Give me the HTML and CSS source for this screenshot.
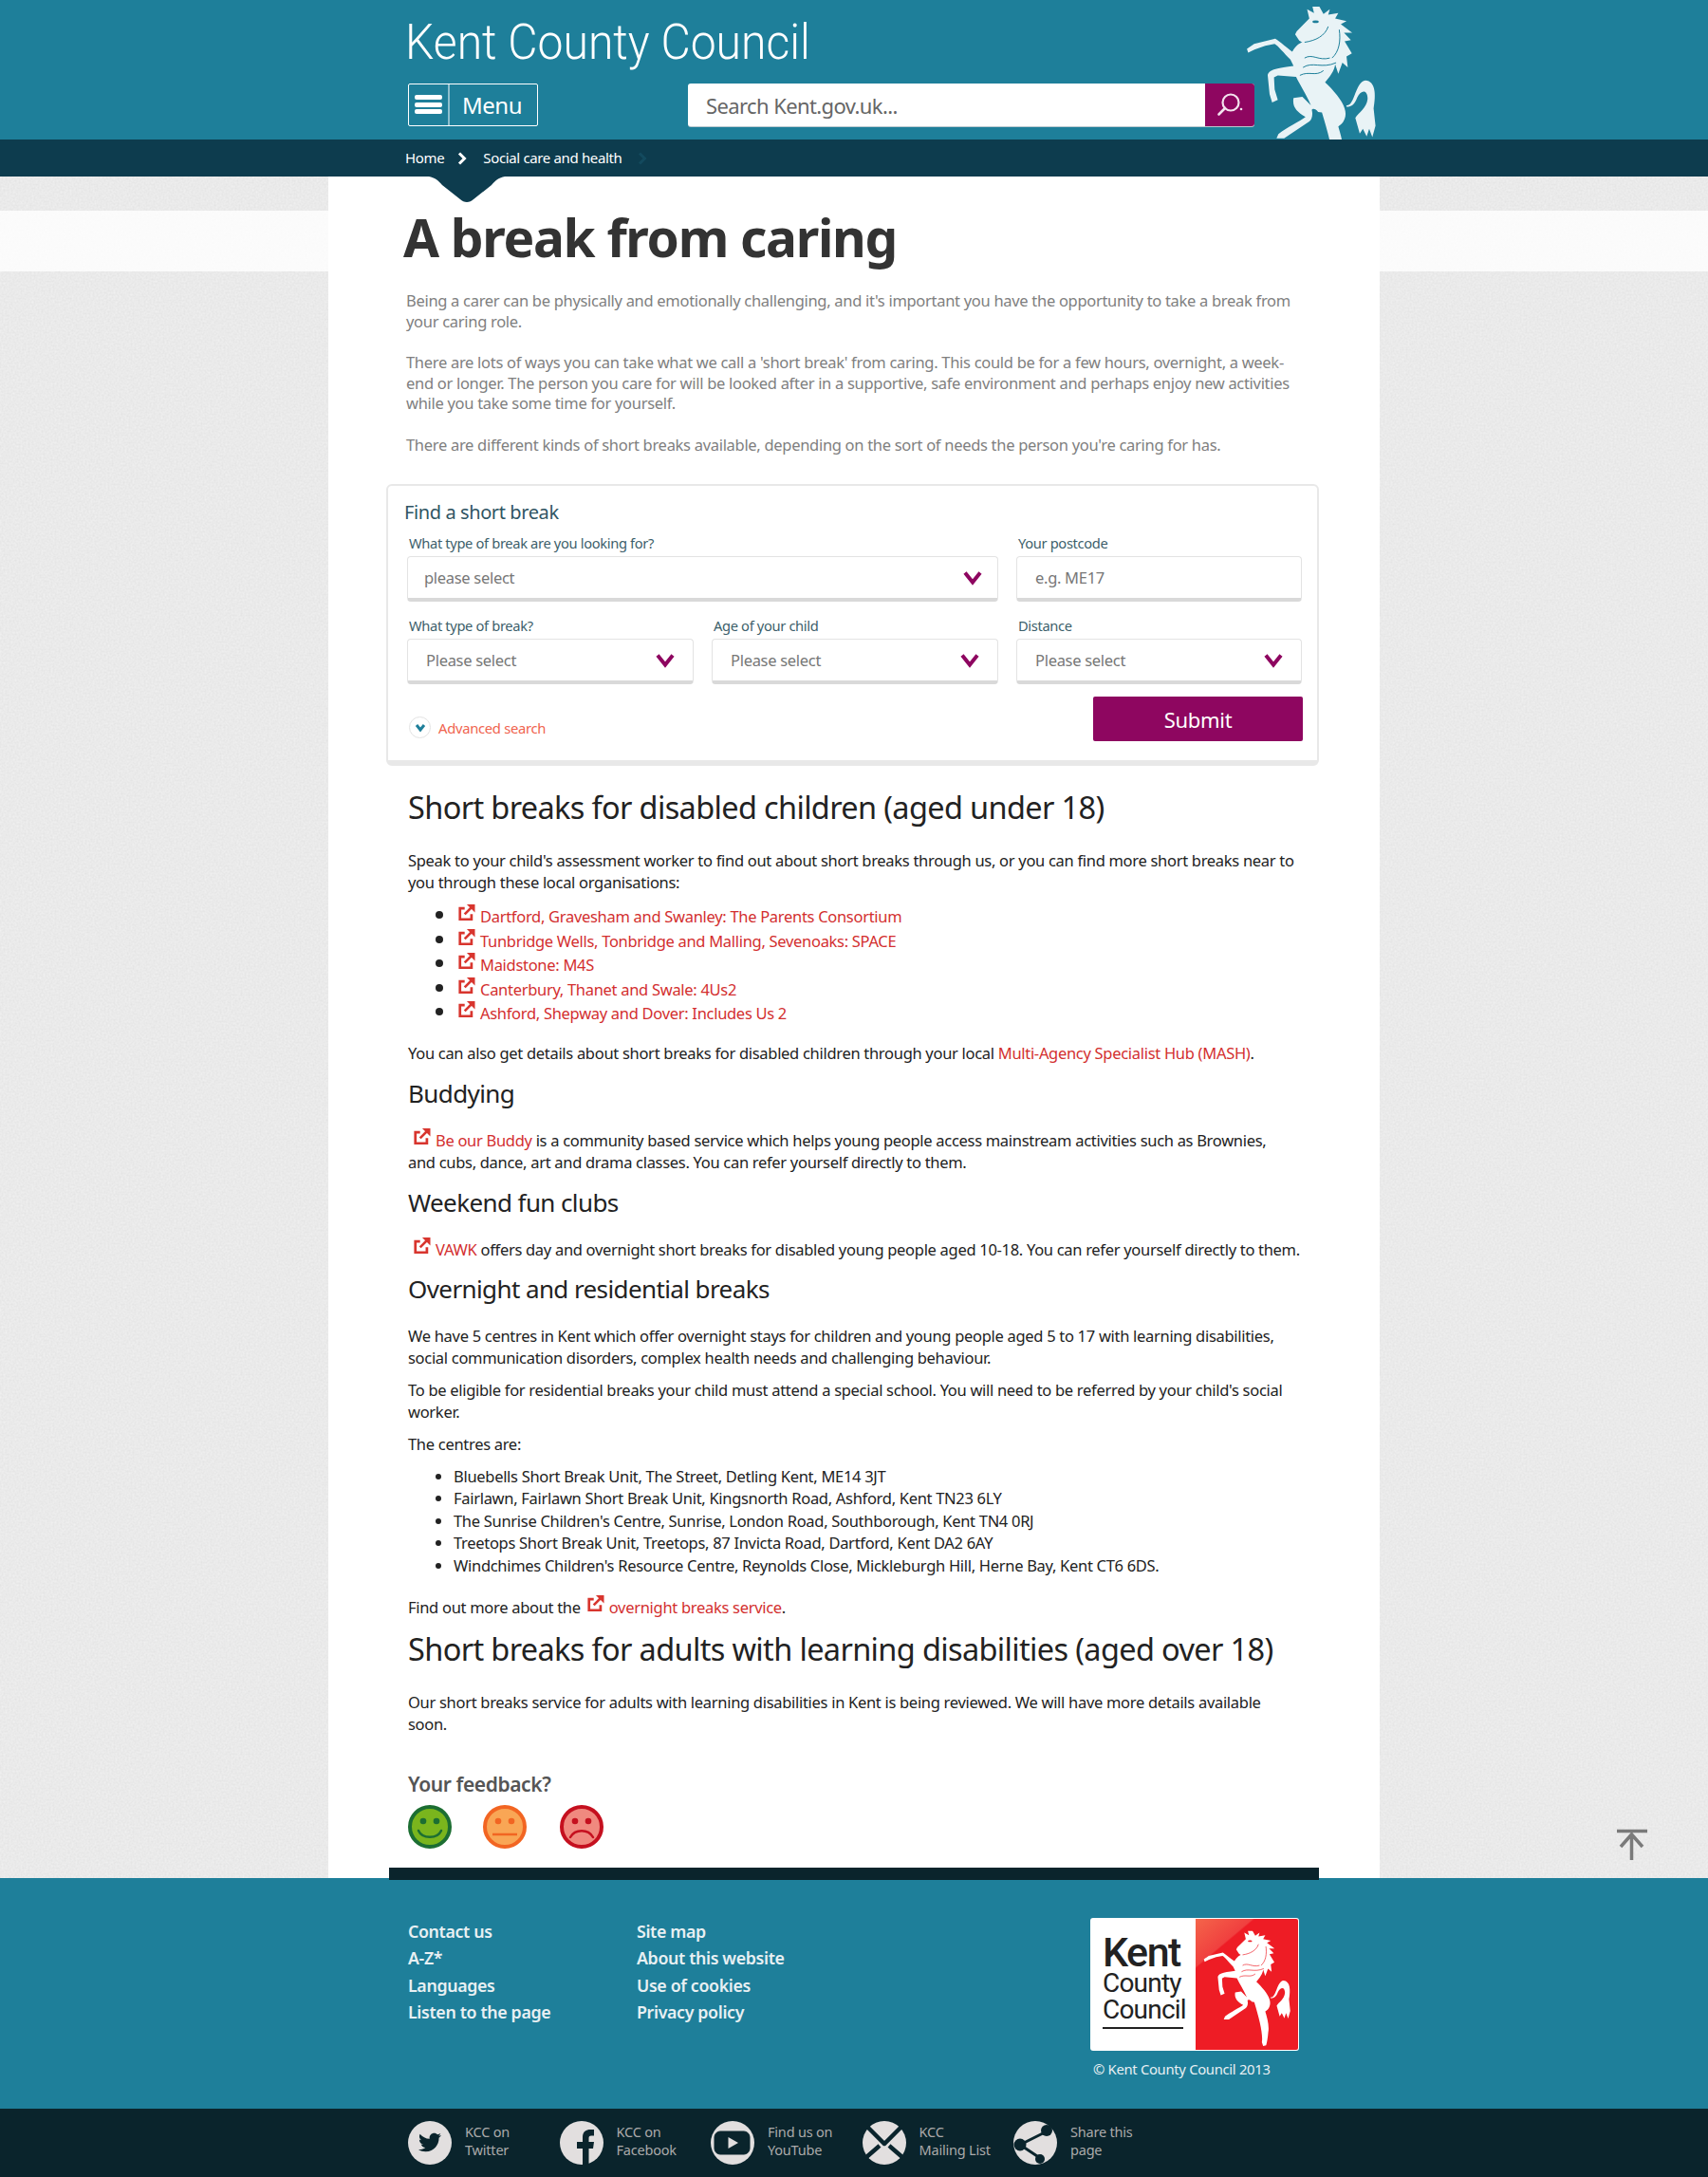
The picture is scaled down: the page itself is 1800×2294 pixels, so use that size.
FILE: index.html
```html
<!DOCTYPE html>
<html lang="en">
<head>
  <meta charset="UTF-8" />
  <title>A break from caring - Kent County Council</title>
  <link rel="stylesheet" href="styles.css">
</head>
<body>
  <svg class="defs" width="0" height="0">
    <symbol id="horse" viewBox="930 10 430 560">
      <path fill="currentColor" d="M1172 22 L1185 45 L1205 30 L1200 48 L1232 42 L1222 60 L1258 68 L1240 78 L1276 105 L1250 105 L1272 128 L1252 132 L1275 170 L1258 180 L1262 215 L1245 200 L1232 235 L1222 205 C1220 225 1205 245 1190 262 C1215 285 1245 320 1252 345 C1262 375 1245 395 1232 402 C1240 430 1252 470 1246 500 C1244 525 1240 550 1236 562 L1222 566 L1216 548 C1222 510 1205 440 1180 358 L1168 356 C1160 345 1150 345 1148 350 C1152 365 1148 380 1140 386 L1060 440 L1036 440 L1042 426 C1070 405 1110 385 1128 372 C1100 355 1085 340 1090 312 L1118 308 L1145 335 C1130 300 1110 270 1098 245 L1040 240 L1028 246 L1030 285 L1040 318 L1022 326 L1014 300 L1008 240 C1010 225 1025 218 1090 210 L1080 190 C1060 170 1040 145 1030 140 L1000 146 L966 158 L946 168 L942 156 L965 140 L1032 124 C1050 135 1070 155 1086 165 C1098 145 1110 135 1128 132 L1118 136 L1108 130 L1095 110 L1100 100 L1140 60 L1133 30 L1155 42 L1150 22 Z"/>
      <path fill="currentColor" d="M1258 335 C1285 338 1285 260 1318 256 C1350 258 1352 300 1344 345 L1350 400 L1340 436 L1330 410 L1322 434 L1310 410 L1300 425 L1286 375 C1295 360 1322 345 1325 315 C1325 285 1305 285 1292 310 C1285 330 1275 340 1258 340 Z"/>
      <path fill="none" stroke="var(--horse-line)" stroke-width="3" d="M1235 95 C1240 130 1235 165 1212 185 M1125 135 C1160 130 1190 115 1200 85 M1125 185 C1150 170 1170 195 1205 185 M1120 215 C1150 195 1180 220 1225 200 M1110 240 C1140 225 1160 245 1185 225"/>
      <ellipse cx="1160" cy="70" rx="10" ry="4" fill="var(--horse-line)"/>
    </symbol>
    <symbol id="ext" viewBox="0 0 20 20">
      <path fill="none" stroke="currentColor" stroke-width="3" d="M8 4.500H2.500V17.500H16V11.500"/>
      <path fill="none" stroke="currentColor" stroke-width="3" d="M8 11.500L16 3.500"/>
      <path fill="currentColor" d="M10.500 0H20V9.500Z"/>
    </symbol>
    <symbol id="chev" viewBox="0 0 20 16">
      <path fill="none" stroke="#8e0660" stroke-width="4" d="M2 2.500L10 12.500L18 2.500"/>
    </symbol>
  </svg>

  <header class="site-header">
    <div class="wrap head-inner">
      <div class="site-name">Kent County Council</div>
      <div class="head-tools">
        <a class="menu-btn" href="#">
          <span class="burger"><i></i><i></i><i></i></span>
          <span class="menu-label">Menu</span>
        </a>
        <div class="search">
          <span class="search-text">Search Kent.gov.uk...</span>
          <span class="search-btn">
            <svg width="28" height="28" viewBox="0 0 28 28"><circle cx="15" cy="11" r="8.500" fill="none" stroke="#f3e3ee" stroke-width="2.200"/><path d="M9 17L2.500 23.500" stroke="#f3e3ee" stroke-width="2.600" stroke-linecap="round"/><circle cx="26" cy="18" r="1.300" fill="#f3e3ee"/></svg>
          </span>
        </div>
      </div>
      <svg class="head-horse"><use href="#horse"/></svg>
    </div>
  </header>

  <nav class="crumbs">
    <div class="wrap crumbs-inner">
      <a href="#">Home</a>
      <svg class="crumb-chev" width="10" height="14" viewBox="0 0 10 14"><path d="M2 1.500L7.500 7L2 12.500" fill="none" stroke="#fff" stroke-width="3"/></svg>
      <a href="#">Social care and health</a>
      <svg class="crumb-chev crumb-last" width="10" height="14" viewBox="0 0 10 14"><path d="M2 1.500L7.500 7L2 12.500" fill="none" stroke="#134a5e" stroke-width="3"/></svg>
      <svg class="crumb-notch" width="80" height="27" viewBox="0 0 80 27"><path d="M0 0H80C74 1 70 4 66 9L47 24C43 28 37 28 33 24L14 9C10 4 6 1 0 0Z" fill="#0d3c4e"/></svg>
    </div>
  </nav>

  <div class="page">
    <main class="wrap main">
      <h1>A break from caring</h1>
      <div class="intro">
        <p>Being a carer can be physically and emotionally challenging, and it's important you have the opportunity to take a break from your caring role.</p>
        <p>There are lots of ways you can take what we call a 'short break' from caring. This could be for a few hours, overnight, a week-end or longer. The person you care for will be looked after in a supportive, safe environment and perhaps enjoy new activities while you take some time for yourself.</p>
        <p>There are different kinds of short breaks available, depending on the sort of needs the person you're caring for has.</p>
      </div>

      <form class="finder">
        <div class="finder-title">Find a short break</div>
        <div class="finder-grid">
          <label class="field span2">
            <span>What type of break are you looking for?</span>
            <div class="box first"><b>please select</b><svg width="20" height="16"><use href="#chev"/></svg></div>
          </label>
          <label class="field">
            <span>Your postcode</span>
            <input class="box" type="text" placeholder="e.g. ME17">
          </label>
          <label class="field">
            <span>What type of break?</span>
            <div class="box"><b>Please select</b><svg width="20" height="16"><use href="#chev"/></svg></div>
          </label>
          <label class="field">
            <span>Age of your child</span>
            <div class="box"><b>Please select</b><svg width="20" height="16"><use href="#chev"/></svg></div>
          </label>
          <label class="field">
            <span>Distance</span>
            <div class="box"><b>Please select</b><svg width="20" height="16"><use href="#chev"/></svg></div>
          </label>
        </div>
        <div class="finder-foot">
          <a class="advanced" href="#">
            <span class="adv-circle"><svg width="12" height="10" viewBox="0 0 12 10"><path d="M2 2L6 7L10 2" fill="none" stroke="#1e7f9a" stroke-width="3"/></svg></span>
            Advanced search
          </a>
          <button class="submit" type="button">Submit</button>
        </div>
      </form>

      <section class="content">
        <h2>Short breaks for disabled children (aged under 18)</h2>
        <p class="after-h2">Speak to your child's assessment worker to find out about short breaks through us, or you can find more short breaks near to you through these local organisations:</p>
        <ul class="links">
          <li><a href="#"><svg class="ext"><use href="#ext"/></svg>Dartford, Gravesham and Swanley: The Parents Consortium</a></li>
          <li><a href="#"><svg class="ext"><use href="#ext"/></svg>Tunbridge Wells, Tonbridge and Malling, Sevenoaks: SPACE</a></li>
          <li><a href="#"><svg class="ext"><use href="#ext"/></svg>Maidstone: M4S</a></li>
          <li><a href="#"><svg class="ext"><use href="#ext"/></svg>Canterbury, Thanet and Swale: 4Us2</a></li>
          <li><a href="#"><svg class="ext"><use href="#ext"/></svg>Ashford, Shepway and Dover: Includes Us 2</a></li>
        </ul>
        <p>You can also get details about short breaks for disabled children through your local <a href="#">Multi-Agency Specialist Hub (MASH)</a>.</p>

        <h3>Buddying</h3>
        <p><a class="lead" href="#"><svg class="ext"><use href="#ext"/></svg>Be our Buddy</a> is a community based service which helps young people access mainstream activities such as Brownies,<br>and cubs, dance, art and drama classes. You can refer yourself directly to them.</p>

        <h3>Weekend fun clubs</h3>
        <p><a class="lead" href="#"><svg class="ext"><use href="#ext"/></svg>VAWK</a> offers day and overnight short breaks for disabled young people aged 10-18. You can refer yourself directly to them.</p>

        <h3 class="h3-tight">Overnight and residential breaks</h3>
        <p>We have 5 centres in Kent which offer overnight stays for children and young people aged 5 to 17 with learning disabilities, social communication disorders, complex health needs and challenging behaviour.</p>
        <p>To be eligible for residential breaks your child must attend a special school. You will need to be referred by your child's social worker.</p>
        <p>The centres are:</p>
        <ul class="centres">
          <li>Bluebells Short Break Unit, The Street, Detling Kent, ME14 3JT</li>
          <li>Fairlawn, Fairlawn Short Break Unit, Kingsnorth Road, Ashford, Kent TN23 6LY</li>
          <li>The Sunrise Children's Centre, Sunrise, London Road, Southborough, Kent TN4 0RJ</li>
          <li>Treetops Short Break Unit, Treetops, 87 Invicta Road, Dartford, Kent DA2 6AY</li>
          <li>Windchimes Children's Resource Centre, Reynolds Close, Mickleburgh Hill, Herne Bay, Kent CT6 6DS.</li>
        </ul>
        <p>Find out more about the <a class="inline-ext" href="#"><svg class="ext"><use href="#ext"/></svg>overnight breaks service</a>.</p>

        <h2 class="h2-second">Short breaks for adults with learning disabilities (aged over 18)</h2>
        <p class="after-h2">Our short breaks service for adults with learning disabilities in Kent is being reviewed. We will have more details available<br>soon.</p>
      </section>

      <div class="feedback">
        <div class="feedback-title">Your feedback?</div>
        <div class="faces">
          <svg width="46" height="46" viewBox="0 0 46 46"><circle cx="23" cy="23" r="21" fill="#7ab51d" stroke="#1c6e32" stroke-width="4"/><circle cx="16" cy="17" r="3.300" fill="#1c6e32"/><circle cx="30" cy="17" r="3.300" fill="#1c6e32"/><path d="M11 27C15 36 31 36 35 27" fill="none" stroke="#1c6e32" stroke-width="2.500" stroke-linecap="round"/></svg>
          <svg class="face-mid" width="46" height="46" viewBox="0 0 46 46"><circle cx="23" cy="23" r="21" fill="#f9a655" stroke="#f26522" stroke-width="4"/><circle cx="16" cy="17" r="3.300" fill="#f26522"/><circle cx="30" cy="17" r="3.300" fill="#f26522"/><path d="M10 31H36" stroke="#f26522" stroke-width="2.500"/></svg>
          <svg class="face-sad" width="46" height="46" viewBox="0 0 46 46"><circle cx="23" cy="23" r="21" fill="#f0897f" stroke="#c5101f" stroke-width="4"/><circle cx="16" cy="17" r="3.300" fill="#c5101f"/><circle cx="30" cy="17" r="3.300" fill="#c5101f"/><path d="M11 34C16 25 30 25 35 34" fill="none" stroke="#c5101f" stroke-width="2.500" stroke-linecap="round"/></svg>
        </div>
      </div>
      <div class="main-rule"></div>
    </main>
    <a class="to-top" href="#">
      <svg width="32" height="34" viewBox="0 0 32 34"><path d="M0 2.500H32M15.500 33V6M4 19L15.500 6L27 19" fill="none" stroke="#7a7a7a" stroke-width="3.500"/></svg>
    </a>
  </div>

  <footer class="site-footer">
    <div class="wrap foot-inner">
      <ul class="foot-links">
        <li><a href="#">Contact us</a></li>
        <li><a href="#">A-Z*</a></li>
        <li><a href="#">Languages</a></li>
        <li><a href="#">Listen to the page</a></li>
      </ul>
      <ul class="foot-links second">
        <li><a href="#">Site map</a></li>
        <li><a href="#">About this website</a></li>
        <li><a href="#">Use of cookies</a></li>
        <li><a href="#">Privacy policy</a></li>
      </ul>
      <div class="foot-logo">
        <div class="logo-card">
          <div class="logo-words">
            <span class="logo-kent">Kent</span>
            <span>County</span>
            <span>Council</span>
          </div>
          <div class="logo-red"><svg class="logo-horse"><use href="#horse"/></svg></div>
        </div>
        <div class="copyright">© Kent County Council 2013</div>
      </div>
    </div>
  </footer>

  <div class="social">
    <div class="wrap social-inner">
      <a href="#">
        <svg width="46" height="46" viewBox="0 0 46 46"><circle cx="23" cy="23" r="23" fill="#e2dfdf"/><g transform="translate(11 10.500)"><path fill="#0a242c" d="M23.954 4.569c-.885.389-1.83.654-2.825.775 1.014-.611 1.794-1.574 2.163-2.723-.951.555-2.005.959-3.127 1.184-.896-.959-2.173-1.559-3.591-1.559-2.717 0-4.92 2.203-4.92 4.917 0 .39.045.765.127 1.124C7.691 8.094 4.066 6.13 1.64 3.161c-.427.722-.666 1.561-.666 2.475 0 1.71.87 3.213 2.188 4.096-.807-.026-1.566-.248-2.228-.616v.061c0 2.385 1.693 4.374 3.946 4.827-.413.111-.849.171-1.296.171-.314 0-.615-.03-.916-.086.631 1.953 2.445 3.377 4.604 3.417-1.68 1.319-3.809 2.105-6.102 2.105-.39 0-.779-.023-1.17-.067 2.189 1.394 4.768 2.209 7.557 2.209 9.054 0 13.999-7.496 13.999-13.986 0-.209 0-.42-.015-.63.961-.689 1.8-1.56 2.46-2.548l-.047-.02z"/></g></svg>
        <span>KCC on<br>Twitter</span>
      </a>
      <a href="#">
        <svg width="46" height="46" viewBox="0 0 46 46"><circle cx="23" cy="23" r="23" fill="#e2dfdf"/><path fill="#0a242c" d="M24 46V29H18V22H24V17C24 11 28 9 32 9H36V15.500H33C31 15.500 30.500 16.500 30.500 18V22H36L35 29H30.500V46Z"/></svg>
        <span>KCC on<br>Facebook</span>
      </a>
      <a href="#">
        <svg width="46" height="46" viewBox="0 0 46 46"><circle cx="23" cy="23" r="23" fill="#e2dfdf"/><rect x="4" y="11" width="37" height="24" rx="6" fill="#0a242c" stroke="#0a242c"/><path fill="#e2dfdf" d="M18.500 17L29 23L18.500 29Z"/></svg>
        <span>Find us on<br>YouTube</span>
      </a>
      <a href="#">
        <svg width="46" height="46" viewBox="0 0 46 46"><circle cx="23" cy="23" r="23" fill="#e2dfdf"/><path fill="none" stroke="#0a242c" stroke-width="4.500" d="M5 6L23 24L41 6M3 39L18 26M43 39L28 26"/><path d="M18 29L23 26L28 29L23 34Z" fill="#e2dfdf"/></svg>
        <span>KCC<br>Mailing List</span>
      </a>
      <a href="#">
        <svg width="46" height="46" viewBox="0 0 46 46"><circle cx="23" cy="23" r="23" fill="#e2dfdf"/><path fill="none" stroke="#0a242c" stroke-width="3" d="M7 25L35 11M7 25L28 39"/><circle cx="35" cy="10" r="6" fill="#0a242c"/><circle cx="7" cy="25" r="6.500" fill="#0a242c"/><circle cx="28" cy="40" r="5" fill="#0a242c"/></svg>
        <span>Share this<br>page</span>
      </a>
    </div>
  </div>
</body>
</html>
```

FILE: styles.css
```css
* {
  box-sizing: border-box;
}

body {
  margin: 0;
  font-family: "Noto Sans", sans-serif;
  font-size: 16.500px;
  letter-spacing: -0.3px;
  color: #222;
}

a {
  text-decoration: none;
  color: inherit;
}

.defs {
  position: absolute;
}

.wrap {
  width: 1108px;
  margin: 0 auto;
  position: relative;
}

/* header */
.site-header {
  background: #1e7f9a;
  height: 147px;
  overflow: hidden;
}

.head-inner {
  height: 147px;
  padding: 17px 0 0 81px;
}

.site-name {
  font-family: Roboto, sans-serif;
  font-weight: 300;
  font-size: 52px;
  line-height: 56px;
  letter-spacing: 0;
  color: #fff;
  white-space: nowrap;
  transform: scaleX(0.925);
  transform-origin: left;
}

.head-tools {
  display: flex;
  align-items: flex-start;
  margin-top: 15px;
  padding-left: 3px;
}

.menu-btn {
  width: 137px;
  height: 45px;
  border: 1px solid #fff;
  border-radius: 2px;
  display: flex;
  align-items: center;
  color: #fff;
}

.burger {
  width: 43px;
  height: 100%;
  padding: 11px 6px 0;
  border-right: 2px solid #8dbfce;
}

.burger i {
  display: block;
  height: 5px;
  background: #fff;
  border-radius: 2px;
  margin-bottom: 2.500px;
}

.menu-label {
  font-size: 24px;
  letter-spacing: -0.5px;
  margin-left: 13px;
}

.search {
  margin-left: 158px;
  width: 597px;
  height: 45px;
  background: #fff;
  border-radius: 3px;
  display: flex;
  justify-content: space-between;
  align-items: center;
  box-shadow: 0 1px 0 #b9c9cf;
}

.search-text {
  padding-left: 19px;
  font-size: 22px;
  letter-spacing: -0.6px;
  color: #666;
}

.search-btn {
  width: 52px;
  height: 45px;
  background: #8e0660;
  border-radius: 0 3px 3px 0;
  display: flex;
  align-items: center;
  justify-content: center;
}

.head-horse {
  position: absolute;
  left: 964px;
  top: 3px;
  width: 143px;
  height: 186px;
  color: #e9f3f6;
  --horse-line: #1e7f9a;
}

/* breadcrumb */
.crumbs {
  position: relative;
  z-index: 2;
  background: #0d3c4e;
  height: 39px;
}

.crumbs-inner {
  height: 39px;
  padding: 0 0 2px 81px;
  display: flex;
  align-items: center;
  font-size: 15px;
  letter-spacing: -0.35px;
  color: #fff;
}

.crumb-chev {
  margin: 2px 17px 0 14px;
}

.crumb-last {
  margin-left: 16px;
}

.crumb-notch {
  position: absolute;
  left: 106px;
  top: 39px;
}

/* page */
.page {
  position: relative;
  background:
    linear-gradient(rgba(255, 255, 255, 0.82), rgba(255, 255, 255, 0.82)) 0 36px / 100% 64px no-repeat,
    url("data:image/svg+xml,%3Csvg xmlns='http://www.w3.org/2000/svg' width='400' height='400'%3E%3Cfilter id='n'%3E%3CfeTurbulence type='fractalNoise' baseFrequency='.5' numOctaves='4'/%3E%3CfeColorMatrix values='0 0 0 0 .5 0 0 0 0 .5 0 0 0 0 .5 0 0 0 .3 0'/%3E%3C/filter%3E%3Crect width='400' height='400' filter='url(%23n)'/%3E%3C/svg%3E"),
    #f2f2f2;
}

.main {
  background: #fff;
  height: 1793px;
  padding: 0 64px 0 84px;
}

h1 {
  margin: 0 0 0 -5px;
  padding-top: 29px;
  font-size: 55px;
  line-height: 70px;
  font-weight: 700;
  letter-spacing: -1.3px;
  color: #333;
}

.intro {
  margin: 21px 0 0 -2px;
  width: 945px;
  color: #808080;
  line-height: 21.500px;
  letter-spacing: -0.3px;
}

.intro p {
  margin: 0 0 22px;
}

/* search card */
.finder {
  margin: 31px 0 0 -23px;
  width: 983px;
  height: 297px;
  border: 2.500px solid #e8e8e8;
  border-bottom-width: 6px;
  border-radius: 6px;
  padding: 16px 15px 0 17px;
  color: #3d5f6b;
}

.finder-title {
  font-size: 20px;
  line-height: 24px;
  color: #2f5564;
  letter-spacing: -0.4px;
}

.finder-grid {
  display: grid;
  grid-template-columns: 302px 302px 301px;
  column-gap: 19px;
  row-gap: 14px;
  margin: 9px 0 0 3px;
}

.field {
  display: block;
}

.span2 {
  grid-column: span 2;
}

.field span {
  display: block;
  font-size: 14.700px;
  line-height: 22px;
  padding-left: 2px;
  height: 25px;
  letter-spacing: -0.35px;
}

.box {
  display: flex;
  width: 100%;
  height: 48px;
  justify-content: space-between;
  align-items: center;
  background: #fff;
  border: 1px solid #e3e3e3;
  border-bottom: 4px solid #d9d9d9;
  border-radius: 4px;
  padding: 0 19px;
  font-family: inherit;
  font-size: 16.500px;
  letter-spacing: -0.3px;
  color: #777;
}

.box.first {
  padding: 0 16px 0 17px;
}

.box b {
  font-weight: 400;
}

.box::placeholder {
  color: #777;
  opacity: 1;
}

.finder-foot {
  display: flex;
  justify-content: space-between;
  align-items: flex-start;
  margin: 13px 0 0 2px;
}

.advanced {
  display: flex;
  align-items: center;
  margin: 21px 0 0 3px;
  font-size: 14.800px;
  letter-spacing: -0.3px;
  color: #f0644f;
}

.adv-circle {
  width: 23px;
  height: 23px;
  border: 1px solid #e3e3e3;
  border-radius: 50%;
  margin-right: 8px;
  display: flex;
  align-items: center;
  justify-content: center;
}

.submit {
  width: 221px;
  height: 47px;
  background: #8e0660;
  color: #fff;
  border: none;
  border-radius: 2px;
  font-family: inherit;
  font-size: 22px;
  letter-spacing: -0.3px;
}

/* body copy */
.content {
  width: 945px;
  line-height: 23px;
}

.content a {
  color: #d32f2f;
}

.content p {
  margin: 0 0 11px;
}

h2 {
  margin: 0;
  padding-top: 22px;
  font-weight: 400;
  font-size: 32.500px;
  line-height: 44px;
  letter-spacing: -0.65px;
  color: #222;
  white-space: nowrap;
}

h2.h2-second {
  padding-top: 0;
  margin-top: 7px;
}

h3 {
  margin: 0;
  font-weight: 400;
  font-size: 26px;
  line-height: 40px;
  letter-spacing: -0.6px;
  color: #222;
}

.h3-tight {
  margin-top: -1px;
}

.content .after-h2 {
  margin-top: 22px;
}

.content h3 + p {
  margin-top: 18px;
}

.ext {
  width: 19px;
  height: 18px;
  margin: -6px 5px 0 0;
  vertical-align: 1px;
  color: #d8352e;
}

.lead .ext {
  margin-left: 5px;
}

.inline-ext .ext {
  margin-left: 2px;
}

.links {
  margin: -1px 0 19px;
  padding-left: 52px;
  line-height: 25.500px;
}

.links li {
  height: 25.500px;
}

.links li::marker {
  font-size: 22px;
}

.centres {
  margin: 0 0 21px;
  padding-left: 48px;
  line-height: 23.500px;
}

/* feedback */
.feedback {
  margin-top: 37px;
}

.feedback-title {
  font-size: 21px;
  font-weight: 600;
  line-height: 30px;
  color: #555;
  letter-spacing: -0.4px;
}

.faces {
  display: flex;
  margin-top: 7px;
}

.face-mid {
  margin-left: 33px;
}

.face-sad {
  margin-left: 35px;
}

.main-rule {
  position: absolute;
  left: 64px;
  bottom: -2px;
  width: 980px;
  height: 13px;
  background: #0a242c;
}

.to-top {
  position: absolute;
  left: 1704px;
  bottom: 13px;
}

/* footer */
.site-footer {
  background: #1e7f9a;
  height: 243px;
}

.foot-inner {
  display: flex;
  padding: 42px 0 0 84px;
}

.foot-links {
  list-style: none;
  margin: 0;
  padding: 0;
  width: 241px;
  font-size: 17.800px;
  font-weight: 600;
  line-height: 28.300px;
  letter-spacing: -0.35px;
  color: #e8f0f3;
}

.foot-links.second {
  width: 478px;
}

.logo-card {
  width: 220px;
  height: 140px;
  background: #fff;
  border-radius: 3px;
  display: flex;
  overflow: hidden;
}

.logo-words {
  width: 111px;
  padding: 17px 0 0 13px;
  display: flex;
  flex-direction: column;
  font-family: Roboto, sans-serif;
  font-size: 28px;
  line-height: 28px;
  letter-spacing: -0.8px;
  color: #222;
}

.logo-words span {
  width: 85px;
}

.logo-words span:last-child {
  border-bottom: 2px solid #222;
  padding-bottom: 4px;
}

.logo-words .logo-kent {
  font-size: 43px;
  line-height: 38px;
  font-weight: 500;
  letter-spacing: -1.5px;
}

.logo-red {
  flex: 1;
  margin: 1px 1px 1px 0;
  background: linear-gradient(140deg, #f4654a 0, #f0403f 22%, #ee1c25 23%);
  border-radius: 0 2px 2px 0;
  padding: 10px 0 0 6px;
}

.logo-horse {
  display: block;
  width: 96px;
  height: 125px;
  color: #fff;
  --horse-line: #ee1c25;
}

.copyright {
  margin: 9px 0 0 3px;
  font-size: 14.800px;
  line-height: 20px;
  color: #e8f0f3;
  letter-spacing: -0.3px;
}

/* social strip */
.social {
  background: #0a242c;
  height: 72px;
}

.social-inner {
  display: flex;
  padding: 13px 0 0 84px;
}

.social-inner a {
  display: flex;
  width: 159.500px;
  color: #aaa;
  font-size: 14.500px;
  line-height: 19px;
  letter-spacing: -0.2px;
}

.social-inner span {
  margin: 2px 0 0 14px;
}
```
